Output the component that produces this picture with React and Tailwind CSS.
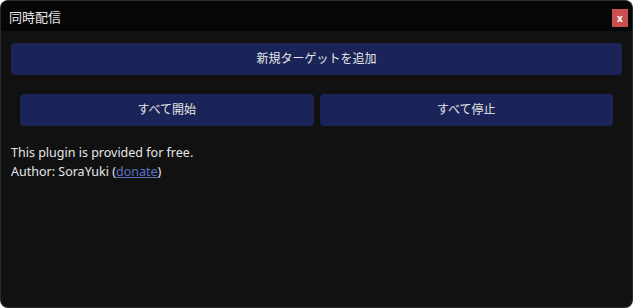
import React from 'react';

const jp = { fontFamily: '"Noto Sans", "Noto Sans CJK JP", sans-serif' };

const Btn = ({ children, className = '' }) => (
  <button
    className={`h-[32px] rounded-[4px] bg-[#1a2458] text-[12px] text-[#e6e6e6] ${className}`}
    style={jp}
  >
    {children}
  </button>
);

export default function App() {
  return (
    <div className="w-[633px] h-[308px] bg-[#2a2a2a] p-px rounded-[8px] overflow-hidden" style={jp}>
      <div className="flex h-full flex-col overflow-hidden rounded-[7px] bg-[#111111]">
        {/* title bar */}
        <div className="flex h-[30px] shrink-0 items-center justify-between bg-[#060606] pl-[8px] pr-[4px]">
          <span className="pt-[3px] text-[13px] text-[#e8e8e8]">同時配信</span>
          <div className="mt-[3px] flex h-[18px] w-[16px] items-center justify-center bg-[#c8504e] text-[10px] font-bold leading-none text-white">
            x
          </div>
        </div>

        {/* body */}
        <div className="flex flex-col px-[10px] pt-[12px]">
          <Btn className="w-full">新規ターゲットを追加</Btn>
          <div className="mt-[19px] flex gap-[6px] pl-[9px] pr-[9px]">
            <Btn className="flex-1">すべて開始</Btn>
            <Btn className="flex-1">すべて停止</Btn>
          </div>
          <div className="mt-[17px] text-[12.5px] leading-[19px] text-[#e6e6e6]">
            <div>This plugin is provided for free.</div>
            <div>
              Author: SoraYuki (<span className="text-[#5b74c6] underline">donate</span>)
            </div>
          </div>
        </div>
      </div>
    </div>
  );
}
